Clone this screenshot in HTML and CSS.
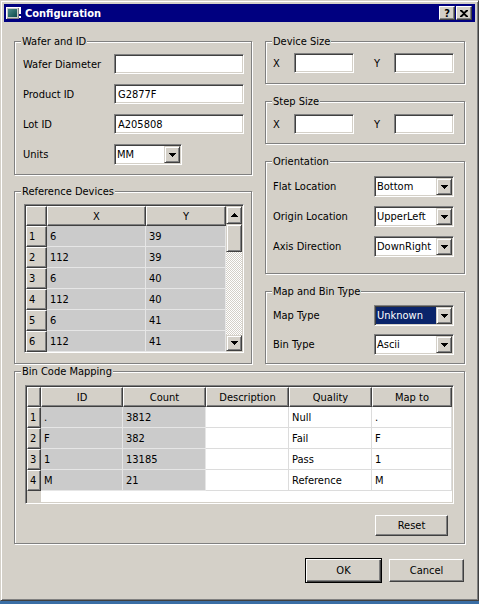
FILE: index.html
```html
<!DOCTYPE html>
<html>
<head>
<meta charset="utf-8">
<title>Configuration</title>
<link rel="stylesheet" href="styles.css">
</head>
<body>
<div class="window">
  <div class="titlebar">
    <svg class="appicon" width="15" height="12" viewBox="0 0 15 12">
      <defs>
        <linearGradient id="ig" x1="0" y1="0" x2="1" y2="1">
          <stop offset="0" stop-color="#4c8c8c"/>
          <stop offset="1" stop-color="#0c4a4a"/>
        </linearGradient>
      </defs>
      <rect x="0" y="0" width="13" height="12" fill="#fff"/>
      <rect x="1" y="1" width="12" height="11" fill="#808080"/>
      <rect x="1" y="1" width="11" height="10" fill="#c8c8c8"/>
      <rect x="2" y="2" width="9" height="8" fill="url(#ig)"/>
      <rect x="13" y="0" width="2" height="7" fill="#fff"/>
      <rect x="13" y="9" width="2" height="2" fill="#fff"/>
    </svg>
    <span class="title">Configuration</span>
    <span class="tbtn help">?</span>
    <span class="tbtn close">
      <svg width="8" height="7" viewBox="0 0 8 7"><path d="M0 0h2l2 2 2-2h2v1L5 3.5 8 6v1H6L4 5 2 7H0V6l3-2.5L0 1z" fill="#000"/></svg>
    </span>
  </div>

  <div class="client">
    <div class="top">
      <div class="col col-left">
        <div class="group g-wafer">
          <span class="legend">Wafer and ID</span>
          <div class="form form-wafer">
            <span class="lbl">Wafer Diameter</span><div class="edit e130"></div>
            <span class="lbl">Product ID</span><div class="edit e130">G2877F</div>
            <span class="lbl">Lot ID</span><div class="edit e130">A205808</div>
            <span class="lbl">Units</span>
            <div class="combo c-units"><span class="ctext">MM</span><span class="cbtn"><svg width="7" height="4" viewBox="0 0 7 4"><path d="M0 0h7v1H0zM1 1h5v1H1zM2 2h3v1H2zM3 3h1v1H3z" fill="#000"/></svg></span></div>
          </div>
        </div>

        <div class="group g-ref">
          <span class="legend">Reference Devices</span>
          <div class="rtable">
            <div class="rgrid">
              <div class="hc"></div><div class="hc">X</div><div class="hc">Y</div>
              <div class="rh">1</div><div class="dc gray">6</div><div class="dc gray">39</div>
              <div class="rh">2</div><div class="dc gray">112</div><div class="dc gray">39</div>
              <div class="rh">3</div><div class="dc gray">6</div><div class="dc gray">40</div>
              <div class="rh">4</div><div class="dc gray">112</div><div class="dc gray">40</div>
              <div class="rh">5</div><div class="dc gray">6</div><div class="dc gray">41</div>
              <div class="rh">6</div><div class="dc gray">112</div><div class="dc gray">41</div>
            </div>
            <div class="vscroll">
              <div class="sbtn sb-up"><svg width="7" height="4" viewBox="0 0 7 4"><path d="M3 0h1v1H3zM2 1h3v1H2zM1 2h5v1H1zM0 3h7v1H0z" fill="#000"/></svg></div>
              <div class="sbtn sb-thumb"></div>
              <div class="strack"></div>
              <div class="sbtn sb-down"><svg width="7" height="4" viewBox="0 0 7 4"><path d="M0 0h7v1H0zM1 1h5v1H1zM2 2h3v1H2zM3 3h1v1H3z" fill="#000"/></svg></div>
            </div>
          </div>
        </div>
      </div>

      <div class="col col-right">
        <div class="group g-dev">
          <span class="legend">Device Size</span>
          <div class="xyrow">
            <span class="lx">X</span><div class="edit e60"></div>
            <span class="ly">Y</span><div class="edit e60"></div>
          </div>
        </div>
        <div class="group g-step">
          <span class="legend">Step Size</span>
          <div class="xyrow">
            <span class="lx">X</span><div class="edit e60"></div>
            <span class="ly">Y</span><div class="edit e60"></div>
          </div>
        </div>
        <div class="group g-orient">
          <span class="legend">Orientation</span>
          <div class="form form-right rg9">
            <span class="lbl">Flat Location</span>
            <div class="combo c80"><span class="ctext">Bottom</span><span class="cbtn"><svg width="7" height="4" viewBox="0 0 7 4"><path d="M0 0h7v1H0zM1 1h5v1H1zM2 2h3v1H2zM3 3h1v1H3z" fill="#000"/></svg></span></div>
            <span class="lbl">Origin Location</span>
            <div class="combo c80"><span class="ctext">UpperLeft</span><span class="cbtn"><svg width="7" height="4" viewBox="0 0 7 4"><path d="M0 0h7v1H0zM1 1h5v1H1zM2 2h3v1H2zM3 3h1v1H3z" fill="#000"/></svg></span></div>
            <span class="lbl">Axis Direction</span>
            <div class="combo c80"><span class="ctext">DownRight</span><span class="cbtn"><svg width="7" height="4" viewBox="0 0 7 4"><path d="M0 0h7v1H0zM1 1h5v1H1zM2 2h3v1H2zM3 3h1v1H3z" fill="#000"/></svg></span></div>
          </div>
        </div>
        <div class="group g-map">
          <span class="legend">Map and Bin Type</span>
          <div class="form form-right rg8">
            <span class="lbl">Map Type</span>
            <div class="combo c80"><span class="ctext sel">Unknown</span><span class="cbtn"><svg width="7" height="4" viewBox="0 0 7 4"><path d="M0 0h7v1H0zM1 1h5v1H1zM2 2h3v1H2zM3 3h1v1H3z" fill="#000"/></svg></span></div>
            <span class="lbl">Bin Type</span>
            <div class="combo c80"><span class="ctext">Ascii</span><span class="cbtn"><svg width="7" height="4" viewBox="0 0 7 4"><path d="M0 0h7v1H0zM1 1h5v1H1zM2 2h3v1H2zM3 3h1v1H3z" fill="#000"/></svg></span></div>
          </div>
        </div>
      </div>
    </div>

    <div class="group g-bin">
      <span class="legend">Bin Code Mapping</span>
      <div class="btable">
        <div class="bgrid">
          <div class="hc"></div><div class="hc">ID</div><div class="hc">Count</div><div class="hc">Description</div><div class="hc">Quality</div><div class="hc">Map to</div>
          <div class="rh">1</div><div class="dc gray">.</div><div class="dc gray">3812</div><div class="dc"></div><div class="dc">Null</div><div class="dc">.</div>
          <div class="rh">2</div><div class="dc gray">F</div><div class="dc gray">382</div><div class="dc"></div><div class="dc">Fail</div><div class="dc">F</div>
          <div class="rh">3</div><div class="dc gray">1</div><div class="dc gray">13185</div><div class="dc"></div><div class="dc">Pass</div><div class="dc">1</div>
          <div class="rh">4</div><div class="dc gray">M</div><div class="dc gray">21</div><div class="dc"></div><div class="dc">Reference</div><div class="dc">M</div>
        </div>
        <div class="bfill"><div class="bfill-rh"></div></div>
      </div>
      <div class="resetrow"><span class="btn b-reset">Reset</span></div>
    </div>

    <div class="dlgbtns">
      <span class="btn b-ok">OK</span>
      <span class="btn b-cancel">Cancel</span>
    </div>
  </div>
</div>
</body>
</html>
```

FILE: styles.css
```css
* { box-sizing: border-box; }
html, body { margin: 0; padding: 0; }
body {
  background: #3a6ea5;
  width: 479px;
  height: 604px;
  overflow: hidden;
  font-family: "DejaVu Sans Condensed", Tahoma, "Liberation Sans", sans-serif;
  font-size: 11px;
  color: #000;
}

.window {
  width: 479px;
  height: 601px;
  background: #d4d0c8;
  border: 1px solid;
  border-color: #d4d0c8 #404040 #404040 #d4d0c8;
  box-shadow: inset 1px 1px #fff, inset -1px -1px #808080;
  padding: 3px;
  display: flex;
  flex-direction: column;
}

/* title bar */
.titlebar {
  height: 18px;
  background: #000080;
  color: #fff;
  display: flex;
  align-items: center;
  padding: 0 3px 0 2px;
}
.appicon { width: 15px; height: 12px; margin-right: 4px; display: block; }
.title { flex: 1; font-weight: bold; font-size: 11px; }
.tbtn {
  width: 16px;
  height: 14px;
  background: #d4d0c8;
  border: 1px solid;
  border-color: #fff #404040 #404040 #fff;
  box-shadow: inset -1px -1px #808080;
  display: flex;
  align-items: center;
  justify-content: center;
  color: #000;
  font-weight: bold;
  font-size: 11px;
  line-height: 1;
}
.tbtn svg { display: block; }
.tbtn.close { margin-left: 1px; }

/* client */
.client {
  flex: 1;
  display: flex;
  flex-direction: column;
  padding: 19px 10px 0 10px;
}
.top { display: flex; gap: 13px; }
.col { display: flex; flex-direction: column; }
.col-left { width: 238px; }
.col-right { width: 200px; }

/* group boxes */
.group {
  position: relative;
  border: 1px solid #808080;
  box-shadow: inset 1px 1px #fff, 1px 1px #fff;
}
.legend {
  position: absolute;
  top: -7px;
  left: 6px;
  padding: 0 1px;
  line-height: 13px;
  background: #d4d0c8;
  white-space: nowrap;
}
.g-wafer { height: 134px; padding: 12px 0 0 8px; }
.g-ref { height: 173px; margin-top: 16px; padding: 12px 0 0 9px; }
.g-dev { height: 43px; padding: 11px 0 0 7px; }
.g-step { height: 43px; margin-top: 17px; padding: 12px 0 0 7px; }
.g-orient { height: 113px; margin-top: 17px; padding: 14px 0 0 7px; }
.g-map { height: 73px; margin-top: 17px; padding: 13px 0 0 7px; }
.g-bin { height: 173px; margin-top: 7px; padding: 13px 0 0 10px; }

/* forms */
.form { display: grid; align-items: center; }
.form-wafer { grid-template-columns: 91px 130px; grid-template-rows: 20px 20px 20px 21px; row-gap: 10px; }
.form-right { grid-template-columns: 101px 80px; grid-auto-rows: 21px; }
.rg9 { row-gap: 9px; }
.rg8 { row-gap: 8px; }
.lbl { white-space: nowrap; }

.xyrow { display: flex; align-items: center; }
.lx { width: 21px; }
.ly { width: 20px; margin-left: 20px; }

/* sunken edit */
.edit {
  height: 20px;
  background: #fff;
  border: 1px solid;
  border-color: #808080 #fff #fff #808080;
  box-shadow: inset 1px 1px #404040, inset -1px -1px #d4d0c8;
  padding: 0 3px;
  display: flex;
  align-items: center;
  white-space: nowrap;
}
.e130 { width: 130px; }
.e60 { width: 60px; }

/* combo */
.combo {
  height: 21px;
  background: #fff;
  border: 1px solid;
  border-color: #808080 #fff #fff #808080;
  box-shadow: inset 1px 1px #404040, inset -1px -1px #d4d0c8;
  padding: 1px;
  display: flex;
}
.c-units { width: 68px; }
.c80 { width: 80px; }
.ctext {
  flex: 1;
  display: flex;
  align-items: center;
  padding-left: 1px;
  white-space: nowrap;
  overflow: hidden;
}
.ctext.sel { background: #0a246a; color: #fff; }
.cbtn {
  width: 16px;
  height: 17px;
  background: #d4d0c8;
  border: 1px solid;
  border-color: #d4d0c8 #404040 #404040 #d4d0c8;
  box-shadow: inset 1px 1px #fff, inset -1px -1px #808080;
  display: flex;
  align-items: center;
  justify-content: center;
}
.cbtn svg, .sbtn svg { display: block; }

/* tables */
.rtable, .btable {
  background: #fff;
  border: 1px solid;
  border-color: #808080 #fff #fff #808080;
  box-shadow: inset 1px 1px #404040, inset -1px -1px #d4d0c8;
  padding: 1px;
  overflow: hidden;
}
.rtable { width: 220px; height: 149px; display: flex; }
.rgrid {
  width: 200px;
  display: grid;
  grid-template-columns: 21px 99px 80px;
  grid-template-rows: 20px;
  grid-auto-rows: 21px;
  align-content: start;
}
.btable { width: 429px; height: 119px; display: flex; flex-direction: column; }
.bgrid {
  display: grid;
  grid-template-columns: 14px 82px 83px 83px 83px 80px;
  grid-template-rows: 20px repeat(4, 21px);
}
.bfill { flex: 1; display: flex; }
.bfill-rh { width: 14px; background: #d4d0c8; }

.hc {
  background: #d4d0c8;
  border: 1px solid;
  border-color: #fff #404040 #404040 #fff;
  box-shadow: inset -1px -1px #808080;
  display: flex;
  align-items: center;
  justify-content: center;
  white-space: nowrap;
  overflow: hidden;
}
.rh {
  background: #d4d0c8;
  border: 1px solid;
  border-color: #fff #404040 #404040 #fff;
  box-shadow: inset -1px -1px #808080;
  display: flex;
  align-items: center;
  padding-left: 2px;
}
.dc {
  background: #fff;
  border-right: 1px solid #dcdcdc;
  border-bottom: 1px solid #dcdcdc;
  display: flex;
  align-items: center;
  padding-left: 3px;
  white-space: nowrap;
  overflow: hidden;
}
.dc.gray { background: #cbcbcb; border-color: #e6e6e6; }

/* scrollbar */
.vscroll { width: 16px; display: flex; flex-direction: column; }
.sbtn {
  width: 16px;
  background: #d4d0c8;
  border: 1px solid;
  border-color: #d4d0c8 #404040 #404040 #d4d0c8;
  box-shadow: inset 1px 1px #fff, inset -1px -1px #808080;
  display: flex;
  align-items: center;
  justify-content: center;
}
.sb-up { height: 18px; }
.sb-thumb { height: 28px; }
.sb-down { height: 16px; }
.strack {
  flex: 1;
  background: repeating-conic-gradient(#fff 0 25%, #d4d0c8 0 50%) 0 0 / 2px 2px;
}

/* buttons */
.btn {
  display: flex;
  align-items: center;
  justify-content: center;
  background: #d4d0c8;
  border: 1px solid;
  border-color: #fff #404040 #404040 #fff;
  box-shadow: inset -1px -1px #808080;
}
.resetrow { display: flex; justify-content: flex-end; margin-top: 11px; padding-right: 16px; }
.b-reset { width: 73px; height: 21px; }
.dlgbtns {
  display: flex;
  justify-content: flex-end;
  align-items: center;
  gap: 7px;
  margin-top: 14px;
  padding-right: 1px;
}
.b-ok {
  width: 77px;
  height: 25px;
  border: 1px solid #000;
  box-shadow: inset 1px 1px #fff, inset -1px -1px #404040, inset -2px -2px #808080;
}
.b-cancel { width: 75px; height: 23px; }
```
